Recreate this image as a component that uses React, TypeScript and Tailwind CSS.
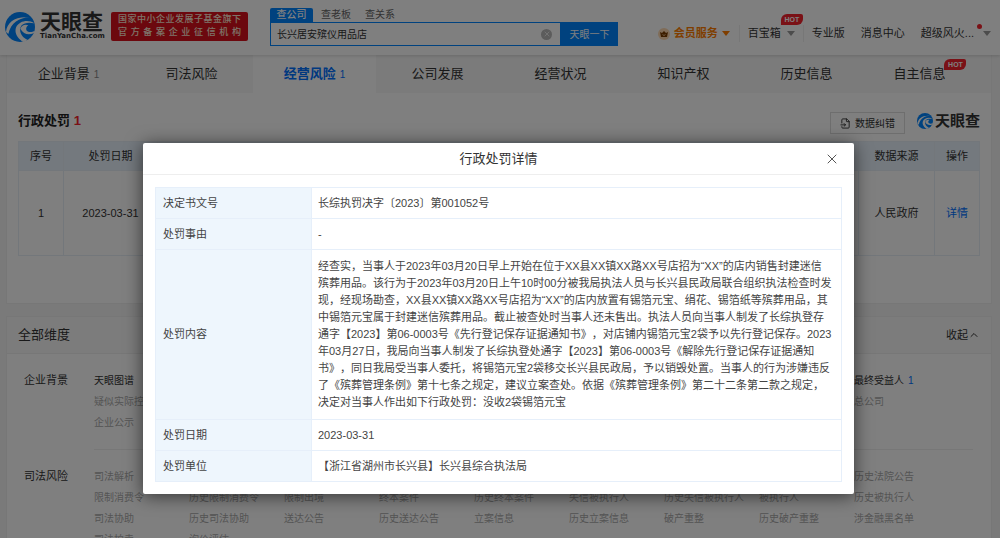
import { ChevronUp, FileInput, X } from "lucide-react";

const TABS = [
  { name: "企业背景", count: "1" },
  { name: "司法风险" },
  { name: "经营风险", count: "1", active: true },
  { name: "公司发展" },
  { name: "经营状况" },
  { name: "知识产权" },
  { name: "历史信息" },
  { name: "自主信息", hot: true },
];

const BACKGROUND_ROWS = [
  ["天眼图谱", "", "", "", "", "", "", "", "最终受益人"],
  ["疑似实际控制人", "", "", "", "", "", "", "", "总公司"],
  ["企业公示", "", "", "", "", "", "", "", ""],
];

const RISK_ROWS = [
  ["司法解析", "", "", "", "", "", "", "", "历史法院公告"],
  ["限制消费令", "历史限制消费令", "限制出境", "终本案件", "历史终本案件", "失信被执行人", "历史失信被执行人", "被执行人", "历史被执行人"],
  ["司法协助", "历史司法协助", "送达公告", "历史送达公告", "立案信息", "历史立案信息", "破产重整", "历史破产重整", "涉金融黑名单"],
  ["司法拍卖", "询价评估", "", "", "", "", "", "", ""],
];

const DETAILS = [
  ["决定书文号", "长综执罚决字〔2023〕第001052号"],
  ["处罚事由", "-"],
  [
    "处罚内容",
    `经查实，当事人于2023年03月20日早上开始在位于XX县XX镇XX路XX号店招为“XX”的店内销售封建迷信
殡葬用品。该行为于2023年03月20日上午10时00分被我局执法人员与长兴县民政局联合组织执法检查时发
现，经现场勘查，XX县XX镇XX路XX号店招为“XX”的店内放置有锡箔元宝、绢花、锡箔纸等殡葬用品，其
中锡箔元宝属于封建迷信殡葬用品。截止被查处时当事人还未售出。执法人员向当事人制发了长综执登存
通字【2023】第06-0003号《先行登记保存证据通知书》，对店铺内锡箔元宝2袋予以先行登记保存。2023
年03月27日，我局向当事人制发了长综执登处通字【2023】第06-0003号《解除先行登记保存证据通知
书》，同日我局受当事人委托，将锡箔元宝2袋移交长兴县民政局，予以销毁处置。当事人的行为涉嫌违反
了《殡葬管理条例》第十七条之规定，建议立案查处。依据《殡葬管理条例》第二十二条第二款之规定，
决定对当事人作出如下行政处罚：没收2袋锡箔元宝`,
  ],
  ["处罚日期", "2023-03-31"],
  ["处罚单位", "【浙江省湖州市长兴县】长兴县综合执法局"],
];

function Logo({ className }: { className: string }) {
  return (
    <svg viewBox="0 0 90 90" className={className} aria-hidden="true">
      <circle cx="45" cy="45" r="45" fill="#0084ff" />
      <path d="M3 60C6 30 30 12 74 16C42 17 18 32 10 66Z" fill="#fff" />
      <path d="M56 90C30 76 22 46 46 32C60 25 76 26 88 34C72 30 58 32 50 40C40 54 46 74 68 84Z" fill="#fff" />
      <path d="M46 50C50 40 60 36 70 40C66 42 62 48 64 54C68 62 80 62 90 56L86 64C70 70 56 68 46 50Z" fill="#fff" />
    </svg>
  );
}

function Caret({ className }: { className: string }) {
  return (
    <svg viewBox="0 0 8 5" className={`h-[5px] w-2 ${className}`} aria-hidden="true">
      <path d="M0 0h8L4 5z" fill="currentColor" />
    </svg>
  );
}

function Hot({ className }: { className: string }) {
  return (
    <span className={`absolute flex h-[11px] w-[22px] items-center justify-center rounded-tl-md rounded-tr-xs rounded-br-md bg-[#f5222d] text-[7px] font-bold text-white ${className}`}>
      HOT
    </span>
  );
}

function Header() {
  return (
    <header className="relative z-10 flex h-[55px] shrink-0 bg-white text-[11px] text-[#333] shadow-[0_1px_3px_rgba(0,0,0,0.15)]">
      <a href="#home" className="mt-3 ml-[5px] flex h-[30px] w-[98px] gap-[5px]">
        <Logo className="size-[30px] shrink-0" />
        <span className="flex flex-col whitespace-nowrap">
          <span className="text-[21px] leading-5 font-bold">天眼查</span>
          <span className="font-['DejaVu_Sans'] text-[7px] leading-[9px] font-bold">TianYanCha.com</span>
        </span>
      </a>
      <div className="mt-3 ml-2 h-[29px] w-[137px] rounded-xs bg-[#d9101c] px-[7px] pt-px text-[9px] leading-[13px] font-medium text-[#fbe9d5] [text-align-last:justify]">
        <p>国家中小企业发展子基金旗下</p>
        <p>官方备案企业征信机构</p>
      </div>
      <form className="mt-2 ml-[22px] w-[348px]" onSubmit={(e) => e.preventDefault()}>
        <div className="flex h-[14px] gap-[14px] text-[10px] leading-[14px] text-[#666]">
          <button type="button" className="w-[43px] rounded-t-xs bg-[#0084ff] font-medium text-white">查公司</button>
          <button type="button" className="-ml-[6px]">查老板</button>
          <button type="button">查关系</button>
        </div>
        <div className="flex h-6">
          <div className="flex min-w-0 grow items-center border border-[#0084ff] pr-2 pl-[6px]">
            <input aria-label="查公司" defaultValue="长兴居安殡仪用品店" className="min-w-0 grow bg-transparent text-[10px] outline-none" />
            <button type="button" aria-label="清除" className="flex size-[11px] items-center justify-center rounded-full bg-[#b8b8b8] text-white">
              <X className="size-2" />
            </button>
          </div>
          <button type="submit" className="w-[57px] bg-[#0084ff] text-[10px] text-white">天眼一下</button>
        </div>
      </form>
      <nav className="mt-[11px] ml-auto flex h-[45px] items-center pr-[9px] whitespace-nowrap">
        <a href="#vip" className="flex items-center font-bold text-[#ff7d00]">
          <svg viewBox="0 0 12 12" className="mr-1 size-3" aria-hidden="true">
            <circle cx="6" cy="6" r="6" fill="#ffd9b0" />
            <path d="M2 4l2 1 2-2 2 2 2-1-1 5H3z" fill="#7a3d00" />
            <path d="M4.800 6.400l1.200 1.200 1.200-1.200" fill="none" stroke="#ffd9b0" />
          </svg>
          会员服务
          <Caret className="ml-1" />
        </a>
        <a href="#box" className="relative ml-[9px] flex items-center border-x border-[#eee] px-2">
          百宝箱
          <Caret className="ml-[6px] text-[#999]" />
          <Hot className="-top-[11px] left-[41px]" />
        </a>
        <a href="#pro" className="ml-2">专业版</a>
        <a href="#messages" className="ml-4">消息中心</a>
        <a href="#account" className="relative ml-4 flex items-center">
          超级风火...
          <Caret className="ml-[9px] text-[#999]" />
          <span className="absolute -top-px right-[9px] size-[5px] rounded-full bg-[#f5222d]" />
        </a>
      </nav>
    </header>
  );
}

function DimensionGroup({ title, rows, className }: { title: string; rows: string[][]; className: string }) {
  return (
    <section className={`flex ${className}`}>
      <h3 className="w-[70px] shrink-0 text-[11px] leading-[21px] text-[#333]">{title}</h3>
      <div className="grid grow grid-cols-9 pr-6">
        {rows.flat().map((name, i) => (
          <span key={i} className={`h-[21px] text-[10px] leading-[21px] whitespace-nowrap ${name === "天眼图谱" || name === "最终受益人" ? "text-[#333]" : "text-[#aaa]"}`}>
            {name}
            {name === "最终受益人" && <span className="ml-1 text-[#0070ff]">1</span>}
          </span>
        ))}
      </div>
    </section>
  );
}

function Page() {
  return (
    <div className="flex h-full flex-col overflow-hidden bg-[#f5f5f5]">
      <Header />
      <main className="flex grow flex-col gap-3 pr-2 pl-[6px]">
        <section className="h-[249px] shrink-0 border border-t-0 border-[#eee] bg-white">
          <nav className="grid h-[38px] grid-cols-8 bg-[#f7f7f7] text-[13px] text-[#333]">
            {TABS.map((tab) => (
              <a
                key={tab.name}
                href={`#${tab.name}`}
                className={`flex items-center justify-center gap-1 ${tab.active ? "bg-white font-bold text-[#0070ff]" : ""} ${tab.hot ? "pr-5" : ""}`}
              >
                <span className="relative">
                  {tab.name}
                  {tab.hot && <Hot className="-top-[5px] left-[51px]" />}
                </span>
                {tab.count && <span className={`text-[10px] font-normal ${tab.active ? "" : "text-[#888]"}`}>{tab.count}</span>}
              </a>
            ))}
          </nav>
          <div className="px-[11px]">
            <div className="flex h-12 items-center pt-2">
              <h2 className="text-[13px] font-bold text-[#222]">
                行政处罚 <span className="text-[#f5222d]">1</span>
              </h2>
              <button type="button" className="mt-1 mr-3 ml-auto flex h-[22px] w-[75px] items-center justify-center gap-1 border border-[#ddd] text-[10px] text-[#333]">
                <FileInput className="size-[11px]" />
                数据纠错
              </button>
              <span className="flex items-center gap-[2px] text-[15px] font-bold text-[#333]">
                <Logo className="size-4" />
                天眼查
              </span>
            </div>
            <table className="w-full table-fixed border-collapse text-center text-[11px] text-[#333] [&_td]:border [&_td]:border-[#e6eef7] [&_th]:border [&_th]:border-[#e6eef7] [&_th]:font-normal">
              <thead className="h-[29px] bg-[#e8f3fc]">
                <tr>
                  <th className="w-[45px]">序号</th>
                  <th className="w-[94px]">处罚日期</th>
                  <th />
                  <th className="w-[76px]">数据来源</th>
                  <th className="w-[45px]">操作</th>
                </tr>
              </thead>
              <tbody>
                <tr className="h-[85px]">
                  <td>1</td>
                  <td>2023-03-31</td>
                  <td />
                  <td>人民政府</td>
                  <td>
                    <a href="#detail" className="text-[#0070ff]">详情</a>
                  </td>
                </tr>
              </tbody>
            </table>
          </div>
        </section>
        <section className="grow border border-[#eee] bg-white">
          <div className="flex h-[37px] items-center justify-between border-b border-[#eee] bg-[#f9f9f9] px-[11px] text-[#333]">
            <h2 className="text-[13px]">全部维度</h2>
            <button type="button" className="flex items-center text-[11px]">
              收起
              <ChevronUp className="size-3" />
            </button>
          </div>
          <div className="pr-[18px] pl-[17px]">
            <DimensionGroup title="企业背景" rows={BACKGROUND_ROWS} className="pt-4 pb-4" />
            <hr className="ml-[70px] border-[#eee]" />
            <DimensionGroup title="司法风险" rows={RISK_ROWS} className="pt-4" />
          </div>
        </section>
      </main>
    </div>
  );
}

function DetailDialog() {
  return (
    <div className="absolute inset-0 z-20 flex items-start justify-center bg-black/50 pt-[143px] pr-[3px]">
      <div role="dialog" aria-labelledby="dialog-title" className="w-full max-w-[711px] rounded-xs bg-white shadow-[0_2px_18px_rgba(0,0,0,0.6)]">
        <div className="relative flex h-8 items-center justify-center border-b border-[#eee]">
          <h2 id="dialog-title" className="text-[13px] text-[#333]">行政处罚详情</h2>
          <button type="button" aria-label="关闭" className="absolute right-[14px] text-[#555]">
            <X className="size-4" strokeWidth={1.5} />
          </button>
        </div>
        <div className="p-3">
          <table className="w-full table-fixed border-collapse text-[11px] leading-[17px] text-[#444] [text-spacing-trim:space-all]">
            <tbody>
              {DETAILS.map(([label, value]) => (
                <tr key={label} className="h-[31px]">
                  <th scope="row" className="w-[156px] border border-[#e6effa] bg-[#eef6fd] px-[7px] text-left font-normal">{label}</th>
                  <td className={`border border-[#e6effa] px-[6px] whitespace-pre-line ${label === "处罚内容" ? "py-2" : ""}`}>{value}</td>
                </tr>
              ))}
            </tbody>
          </table>
        </div>
      </div>
    </div>
  );
}

export default function App() {
  return (
    <div className="relative h-screen overflow-hidden font-['Liberation_Sans','Noto_Sans_CJK_SC',sans-serif]">
      <Page />
      <DetailDialog />
    </div>
  );
}
